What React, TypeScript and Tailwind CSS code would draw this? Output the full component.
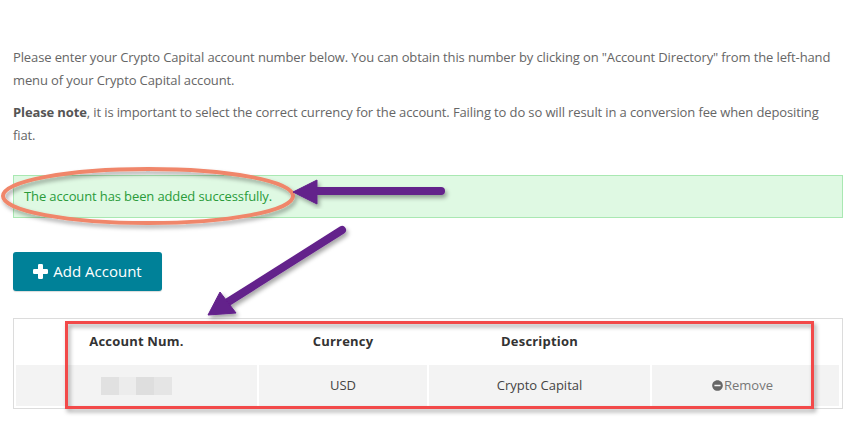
import { FaMinusCircle } from "react-icons/fa";

function PlusIcon() {
  return (
    <svg width="15" height="15" viewBox="0 0 15 15" fill="currentColor">
      <rect x="5" y="0" width="5" height="15" rx="1.2" />
      <rect x="0" y="5" width="15" height="5" rx="1.2" />
    </svg>
  );
}

function Annotations() {
  return (
    <svg
      className="absolute left-0 top-0 pointer-events-none"
      width={858}
      height={441}
      viewBox="0 0 858 441"
    >
      <defs>
        <filter id="shadow" x="-20%" y="-20%" width="140%" height="140%">
          <feDropShadow dx="2" dy="3" stdDeviation="2" floodColor="#000" floodOpacity="0.35" />
        </filter>
      </defs>
      {/* ellipse round the message */}
      <ellipse cx="148" cy="196" rx="145" ry="27" fill="none" stroke="#f0866a" strokeWidth="4" filter="url(#shadow)" />
      {/* left arrow */}
      <g filter="url(#shadow)" fill="#63208b" stroke="#63208b">
        <line x1="441" y1="191" x2="314" y2="191" strokeWidth="8" strokeLinecap="round" />
        <polygon points="293,192 317,180 317,204" strokeWidth="1" strokeLinejoin="round" />
      </g>
      {/* diagonal arrow */}
      <g filter="url(#shadow)" fill="#63208b" stroke="#63208b">
        <line x1="342" y1="230" x2="228" y2="302" strokeWidth="8" strokeLinecap="round" />
        <polygon points="208,315 220,292 236,313" strokeWidth="1" strokeLinejoin="round" />
      </g>
      {/* box round the table */}
      <rect x="66.5" y="322.5" width="746" height="85" fill="none" stroke="#f24848" strokeWidth="3" filter="url(#shadow)" />
    </svg>
  );
}

export default function App() {
  return (
    <div className="relative w-[858px] h-[441px] bg-white overflow-hidden font-['Open_Sans',sans-serif]">
      <div className="w-[830px] ml-[13px] pt-[46px]">
        <p className="text-[13px] leading-[22.5px] tracking-[-0.12px] text-[#666]">
          Please enter your Crypto Capital account number below. You can obtain this number by clicking on "Account
          Directory" from the left-hand menu of your Crypto Capital account.
        </p>
        <p className="mt-[10px] text-[13px] leading-[22.5px] tracking-[-0.12px] text-[#666]">
          <b className="text-[#555]">Please note</b>, it is important to select the correct currency for the account.
          Failing to do so will result in a conversion fee when depositing fiat.
        </p>

        <div className="mt-[29px] h-[43px] flex items-center px-[10px] bg-[#dff9e3] border border-[#a9e8b2] text-[13px] tracking-[-0.12px] text-[#2a9b3a]">
          The account has been added successfully.
        </div>

        <button className="mt-[34px] h-[39px] w-[149px] flex items-center justify-center gap-[5px] rounded-[3px] bg-[#008198] text-white text-[15px] shadow-[0_1px_1px_rgba(0,0,0,0.15)]">
          <PlusIcon />
          Add Account
        </button>

        <div className="mt-[27px] border border-[#dcdcdc] p-[2px] grid grid-cols-[241px_168px_221px_187px] gap-[2px] text-[13px]">
          <div className="h-[42px] flex items-center justify-center font-bold text-[#333] tracking-[0.2px]">Account Num.</div>
          <div className="h-[42px] flex items-center justify-center font-bold text-[#333] tracking-[0.2px]">Currency</div>
          <div className="h-[42px] flex items-center justify-center font-bold text-[#333] tracking-[0.2px]">Description</div>
          <div className="h-[42px]" />

          <div className="h-[41px] bg-[#f3f3f3] flex items-center justify-center">
            <div className="flex h-[18px]">
              <span className="w-[18px] bg-[#e1e1e1]" />
              <span className="w-[17px] bg-[#ececec]" />
              <span className="w-[18px] bg-[#dedede]" />
              <span className="w-[18px] bg-[#e5e5e5]" />
            </div>
          </div>
          <div className="h-[41px] bg-[#f3f3f3] flex items-center justify-center text-[#444]">USD</div>
          <div className="h-[41px] bg-[#f3f3f3] flex items-center justify-center text-[#444]">Crypto Capital</div>
          <div className="h-[41px] bg-[#f3f3f3] flex items-center justify-center gap-[1px] pr-[6px] text-[#777]">
            <FaMinusCircle size={11} className="text-[#666]" />
            Remove
          </div>
        </div>
      </div>
      <Annotations />
    </div>
  );
}
